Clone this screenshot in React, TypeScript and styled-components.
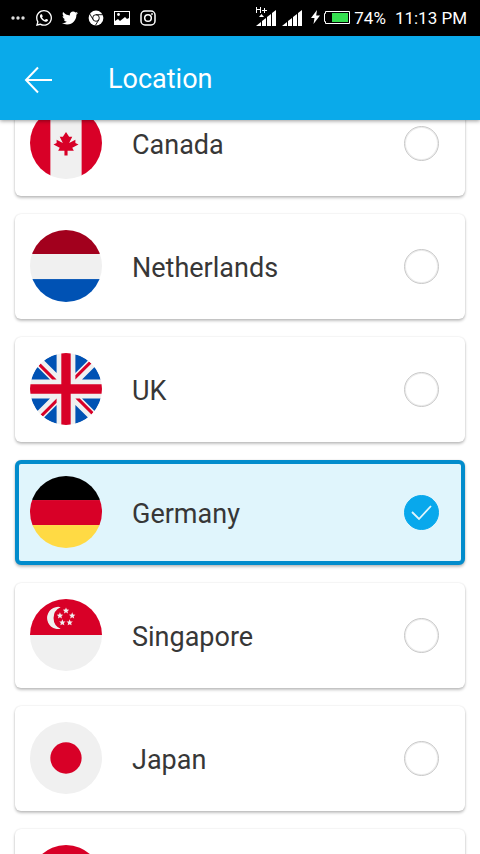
import React, { useState } from "react";
import styled, { createGlobalStyle } from "styled-components";
import { FaTwitter, FaWhatsapp } from "react-icons/fa";

const GlobalStyle = createGlobalStyle`
  * { box-sizing: border-box; }
  body {
    margin: 0;
    background: #fff;
    font-family: Roboto, "Liberation Sans", sans-serif;
  }
`;

const Screen = styled.div`
  display: flex;
  flex-direction: column;
  height: 100vh;
  overflow: hidden;
`;

const StatusBar = styled.div`
  display: flex;
  flex: none;
  align-items: center;
  justify-content: space-between;
  height: 36px;
  padding: 0 13px 0 10px;
  background: #000;
  color: #fff;
  z-index: 2;
`;

const Notifications = styled.div`
  display: flex;
  align-items: center;
  gap: 10px;
  svg { display: block; }
`;

const SystemStatus = styled.div`
  display: flex;
  align-items: center;
  font-size: 17px;
  line-height: 20px;
  white-space: nowrap;
  svg { display: block; }
`;

const Signals = styled.div`
  display: flex;
  gap: 6px;
  margin-right: 9px;
`;

const Battery = styled.div`
  display: flex;
  align-items: center;
  gap: 4px;
  margin-left: 4px;
`;

const Clock = styled.time`
  margin-left: 9px;
`;

const AppBar = styled.header`
  display: flex;
  flex: none;
  align-items: center;
  gap: 56px;
  height: 84px;
  padding: 4px 24px 0;
  background: #0aaaea;
  color: #fff;
  box-shadow: 0 1px 4px rgba(0, 0, 0, 0.4);
  z-index: 1;
`;

const BackButton = styled.button`
  display: block;
  padding: 0;
  border: 0;
  background: none;
  color: inherit;
  svg { display: block; }
`;

const Title = styled.h1`
  margin: 0;
  padding-bottom: 2px;
  font-size: 27px;
  font-weight: 400;
  line-height: 32px;
`;

const Locations = styled.main`
  display: flex;
  flex: 1;
  flex-direction: column;
  gap: 18px;
  min-height: 0;
  margin-top: -29px;
  padding: 0 15px;
  overflow-y: auto;
  scrollbar-width: none;
`;

const Card = styled.label<{ $selected: boolean }>`
  display: flex;
  flex: none;
  align-items: center;
  height: 105px;
  padding: 0 26px 1px 15px;
  border-radius: 6px;
  background: #fff;
  box-shadow: 0 2px 3px rgba(0, 0, 0, 0.24), 0 0 2px rgba(0, 0, 0, 0.12);
  cursor: pointer;
  ${(p) =>
    p.$selected &&
    `
    border: 4px solid #028ccc;
    padding: 0 22px 1px 11px;
    background: #e0f5fc;
  `}
`;

const FlagCircle = styled.svg`
  display: block;
  flex: none;
  width: 72px;
  height: 72px;
  border-radius: 50%;
`;

const Name = styled.span`
  flex: 1;
  padding: 4px 0 0 30px;
  color: #373737;
  font-size: 27px;
  line-height: 32px;
`;

const Radio = styled.input`
  appearance: none;
  flex: none;
  width: 35px;
  height: 35px;
  margin: 0;
  border: 1px solid #c8c8c8;
  border-radius: 50%;
  background: #fff;
  box-shadow: inset 0 0 0 1px rgba(0, 0, 0, 0.08);
  &:checked {
    border-color: #08a8ec;
    box-shadow: none;
    background: #08a8ec
      url("data:image/svg+xml,%3Csvg xmlns='http://www.w3.org/2000/svg' viewBox='0 0 33 33'%3E%3Cpath d='M7 16l7 7L26 10' fill='none' stroke='%23e0f5fc' stroke-width='1.8'/%3E%3C/svg%3E")
      center / 33px 33px no-repeat;
  }
`;

const RED = "#d80027";
const LIGHT = "#f0f0f0";
const BLUE = "#0052b4";

const starPoints = (cx: number, cy: number, r: number) =>
  Array.from({ length: 10 }, (_, i) => {
    const radius = i % 2 ? r * 0.45 : r;
    const a = (Math.PI * i) / 5 - Math.PI / 2;
    return `${(cx + radius * Math.cos(a)).toFixed(1)},${(cy + radius * Math.sin(a)).toFixed(1)}`;
  }).join(" ");

const SINGAPORE_STARS = [
  [256, 84],
  [213, 119],
  [300, 119],
  [230, 168],
  [282, 168],
];

const Bands = ({ colors }: { colors: [string, string, string] }) => (
  <>
    <rect width="512" height="171" fill={colors[0]} />
    <rect y="171" width="512" height="178" fill={colors[1]} />
    <rect y="349" width="512" height="163" fill={colors[2]} />
  </>
);

const flags: Record<string, React.ReactNode> = {
  canada: (
    <>
      <rect x="145" width="222" height="512" fill={LIGHT} />
      <rect width="145" height="512" fill={RED} />
      <rect x="367" width="145" height="512" fill={RED} />
      <polygon
        fill={RED}
        points="300.5,289.4 345,267.1 322.8,256 322.8,233.7 278.3,256 300.5,211.5 278.3,211.5 256,178 233.7,211.5 211.5,211.5 233.7,256 189.2,233.7 189.2,256 167,267.1 211.5,289.4 200.3,311.7 244.9,311.7 244.9,345 267.1,345 267.1,311.7 311.7,311.7"
      />
    </>
  ),
  netherlands: <Bands colors={["#a2001d", LIGHT, BLUE]} />,
  uk: (
    <>
      <rect width="512" height="512" fill={LIGHT} />
      <path
        fill={BLUE}
        d="M52.9 100.1C32.8 126.3 17.6 156.5 8.8 189.2H142zM503.2 189.2c-8.8-32.7-24-62.9-44.1-89L370 189.2zM8.8 322.8c8.8 32.7 24 62.9 44.1 89l89.1-89zM411.9 52.9c-26.2-20.1-56.3-35.3-89.1-44.1V142zM100.1 459.1c26.2 20.1 56.4 35.3 89.1 44.1V370zM189.2 8.8c-32.7 8.8-62.9 24-89.1 44.1l89.1 89.1zM322.8 503.2c32.7-8.8 62.9-24 89.1-44.1L322.8 370zM370 322.8l89.1 89.1c20.1-26.2 35.3-56.4 44.1-89.1z"
      />
      <path fill={RED} d="M222.6 0h66.8v222.6H512v66.8H289.4V512h-66.8V289.4H0v-66.8h222.6z" />
      <path
        fill={RED}
        d="M322.8 322.8L437 437q8-8 15-16.4l-97.8-97.8zM189.2 322.8L75 437q8 8 16.4 15l97.8-97.8zM189.2 189.2L75 75q-8 8-15 16.4l97.8 97.8zM322.8 189.2L437 75q-8-8-16.4-15l-97.8 97.8z"
      />
    </>
  ),
  germany: <Bands colors={["#000", RED, "#ffda44"]} />,
  singapore: (
    <>
      <rect y="256" width="512" height="256" fill={LIGHT} />
      <rect width="512" height="256" fill={RED} />
      <path fill={LIGHT} d="M218 58A79 79 0 1 0 218 212A84 84 0 0 1 218 58z" />
      {SINGAPORE_STARS.map(([x, y]) => (
        <polygon key={`${x}-${y}`} fill={LIGHT} points={starPoints(x, y, 24)} />
      ))}
    </>
  ),
  japan: (
    <>
      <rect width="512" height="512" fill={LIGHT} />
      <circle cx="256" cy="256" r="111.3" fill={RED} />
    </>
  ),
  red: <rect width="512" height="512" fill={RED} />,
};

const locations = [
  { id: "canada", name: "Canada" },
  { id: "netherlands", name: "Netherlands" },
  { id: "uk", name: "UK" },
  { id: "germany", name: "Germany" },
  { id: "singapore", name: "Singapore" },
  { id: "japan", name: "Japan" },
  { id: "red", name: "" },
];

const DotsIcon = () => (
  <svg width="16" height="16" viewBox="0 0 16 16" fill="#ddd">
    <circle cx="3" cy="8" r="1.7" />
    <circle cx="8" cy="8" r="1.7" />
    <circle cx="13" cy="8" r="1.7" />
  </svg>
);

const ChromeIcon = () => (
  <svg width="16" height="16" viewBox="0 0 16 16">
    <circle cx="8" cy="8" r="7.4" fill="#fff" />
    <g fill="none" stroke="#000" strokeWidth="0.9">
      <circle cx="8" cy="8" r="3.3" />
      <path d="M8 4.7h7M5.1 9.6L1.8 4M10.9 9.6L7.4 15.4" />
    </g>
  </svg>
);

const PictureIcon = () => (
  <svg width="16" height="16" viewBox="0 0 16 16">
    <rect x="0.5" y="1.5" width="15" height="13" fill="none" stroke="#fff" />
    <path d="M1 11l3-2 2 2 5-4 2 2 2-1v6H1z" fill="#fff" />
    <circle cx="4.5" cy="4.5" r="1.4" fill="#fff" />
  </svg>
);

const InstagramIcon = () => (
  <svg width="16" height="16" viewBox="0 0 16 16" fill="none" stroke="#fff" strokeWidth="1.5">
    <rect x="1" y="1" width="14" height="14" rx="4" />
    <circle cx="8" cy="8" r="3.3" />
    <circle cx="12" cy="4" r="0.9" fill="#fff" stroke="none" />
  </svg>
);

const SignalIcon = ({ data = false }: { data?: boolean }) => (
  <svg width="20" height="22" viewBox="0 0 20 22" fill="#fff">
    <path d="M0 19L5 15V19zM6 19v-5l4-3v8zM11 19v-9l4-3v12zM16 19V6l4-3v16z" />
    {data && (
      <>
        <path d="M0 0h1v2h3V0h1v6H4V3H1v3H0zM8 1h1v2h2v1H9v2H8V4H6V3h2z" />
        <path d="M3 10l2.5-3L8 10z" />
      </>
    )}
  </svg>
);

const BoltIcon = () => (
  <svg width="9" height="16" viewBox="0 0 9 16" fill="#fff">
    <path d="M6 0L0 8h3.5L2.5 14L9 5.5H5.2z" />
  </svg>
);

const BatteryIcon = () => (
  <svg width="26" height="14" viewBox="0 0 26 14">
    <path d="M1.5 0.5h24v12h-24v-2h-1v-8h1z" fill="none" stroke="#fff" />
    <rect x="8" y="2" width="16" height="9" fill="#35e050" />
  </svg>
);

const ArrowIcon = () => (
  <svg width="28" height="28" viewBox="0 0 28 28" fill="none" stroke="#fff" strokeWidth="2">
    <path d="M14 1.5L2 14l12 12.5M2 14h26" />
  </svg>
);

export default function App() {
  const [selected, setSelected] = useState("germany");
  return (
    <Screen>
      <GlobalStyle />
      <StatusBar>
        <Notifications>
          <DotsIcon />
          <FaWhatsapp size={16} viewBox="0 32 448 448" />
          <FaTwitter size={16} />
          <ChromeIcon />
          <PictureIcon />
          <InstagramIcon />
        </Notifications>
        <SystemStatus>
          <Signals>
            <SignalIcon data />
            <SignalIcon />
          </Signals>
          <BoltIcon />
          <Battery>
            <BatteryIcon />
            <span>74%</span>
          </Battery>
          <Clock>11:13 PM</Clock>
        </SystemStatus>
      </StatusBar>
      <AppBar>
        <BackButton type="button" aria-label="Back">
          <ArrowIcon />
        </BackButton>
        <Title>Location</Title>
      </AppBar>
      <Locations>
        {locations.map(({ id, name }) => (
          <Card key={id} $selected={selected === id}>
            <FlagCircle viewBox="0 0 512 512" aria-hidden="true">
              {flags[id]}
            </FlagCircle>
            <Name>{name}</Name>
            <Radio
              type="radio"
              name="location"
              aria-label={name ? undefined : "Other location"}
              checked={selected === id}
              onChange={() => setSelected(id)}
            />
          </Card>
        ))}
      </Locations>
    </Screen>
  );
}
